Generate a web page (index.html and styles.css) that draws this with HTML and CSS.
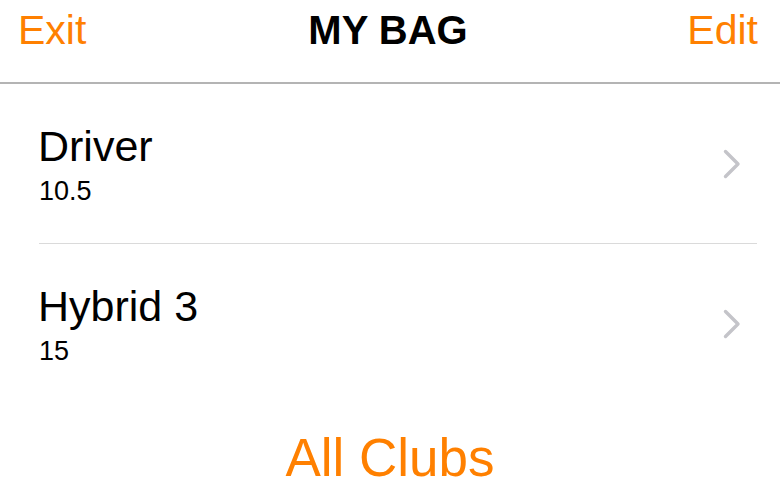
FILE: index.html
```html
<!DOCTYPE html>
<html lang="en">
<head>
  <meta charset="UTF-8">
  <title>My Bag</title>
  <link rel="stylesheet" href="styles.css">
</head>
<body>

  <div class="topbar">
    <span class="nav-btn">Exit</span>
    <h1>MY BAG</h1>
    <span class="nav-btn right">Edit</span>
  </div>

  <ul class="club-list">
    <li class="club">
      <div class="club-info">
        <div class="club-name">Driver</div>
        <div class="club-loft">10.5</div>
      </div>
      <svg class="chevron" width="18" height="30" viewBox="0 0 18 30">
        <path d="M2.5 2.5 L15 15 L2.5 27.5" fill="none" stroke="#c4c4c9" stroke-width="3.4" stroke-linecap="round" stroke-linejoin="round"/>
      </svg>
    </li>
    <li class="club">
      <div class="club-info">
        <div class="club-name">Hybrid 3</div>
        <div class="club-loft">15</div>
      </div>
      <svg class="chevron" width="18" height="30" viewBox="0 0 18 30">
        <path d="M2.5 2.5 L15 15 L2.5 27.5" fill="none" stroke="#c4c4c9" stroke-width="3.4" stroke-linecap="round" stroke-linejoin="round"/>
      </svg>
    </li>
  </ul>

  <div class="all-clubs">All Clubs</div>

</body>
</html>
```

FILE: styles.css
```css
* {
  margin: 0;
  padding: 0;
  box-sizing: border-box;
}
body {
  font-family: 'Liberation Sans', Arial, sans-serif;
  background: #fff;
  color: #000;
  width: 780px;
  height: 494px;
  overflow: hidden;
}
.topbar {
  display: grid;
  grid-template-columns: 1fr auto 1fr;
  align-items: start;
  height: 84px;
  padding: 6px 22px 0 18px;
  border-bottom: 2px solid #b4b4b4;
}
.nav-btn {
  color: #ff8000;
  font-size: 41px;
  line-height: 48px;
}
.nav-btn.right {
  justify-self: end;
}
h1 {
  font-size: 40px;
  line-height: 48px;
  font-weight: bold;
}
.club-list {
  list-style: none;
  margin: 0 23px 0 39px;
}
.club {
  display: flex;
  align-items: center;
  justify-content: space-between;
  padding: 37px 16px 36px 0;
  height: 159px;
}
.club + .club {
  border-top: 1px solid #dadada;
  height: 160px;
}
.club-name {
  font-size: 43px;
  line-height: 48px;
  margin-left: -1px;
}
.club-loft {
  font-size: 27px;
  line-height: 30px;
  margin-top: 6px;
}
.chevron {
  display: block;
}
.all-clubs {
  text-align: center;
  color: #ff8000;
  font-size: 53px;
  line-height: 60px;
  margin-top: 25px;
}
```
